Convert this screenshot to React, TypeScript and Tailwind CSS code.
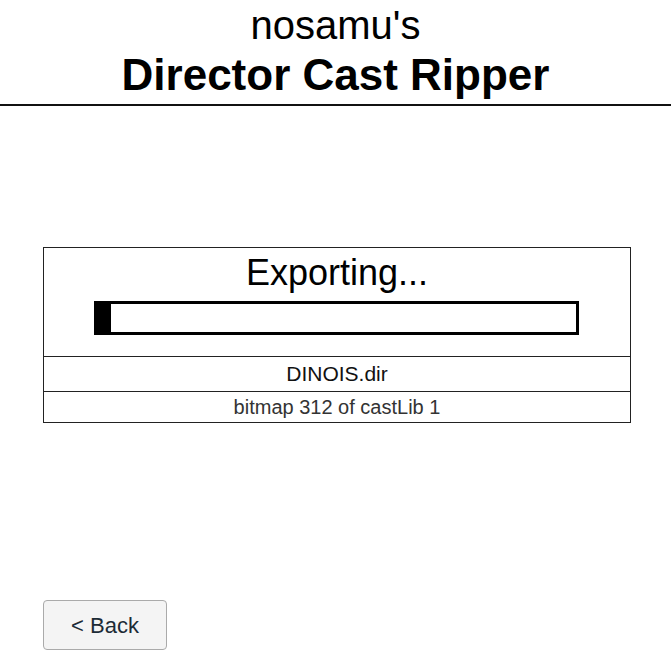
export default function App() {
  const progress = 3; // percent done

  return (
    <div className="min-h-screen bg-white font-['Liberation_Sans',Arial,sans-serif] text-black">
      <header className="border-b-2 border-[#111] pt-[2px] pb-[2px] text-center">
        <div className="text-[40px] leading-[46px]">nosamu's</div>
        <h1 className="text-[44px] font-bold leading-[54px]">Director Cast Ripper</h1>
      </header>

      <section className="ml-[43px] mr-[40px] mt-[141px] border border-[#222]">
        <div className="flex flex-col items-center pt-[4px] pb-[21px]">
          <div className="text-[36px] leading-[42px]">Exporting...</div>
          <div className="mt-[7px] h-[34px] w-[485px] -translate-x-[1px] border-[3px] border-black">
            <div className="h-full bg-black" style={{ width: `${progress}%` }} />
          </div>
        </div>
        <div className="flex h-[35px] items-center justify-center border-t border-[#222] text-[21px] text-[#111]">
          DINOIS.dir
        </div>
        <div className="flex h-[31px] items-center justify-center border-t border-[#222] text-[20px] text-[#333]">
          bitmap 312 of castLib 1
        </div>
      </section>

      <div className="ml-[43px] mt-[177px]">
        <button
          type="button"
          className="h-[50px] w-[124px] rounded-[4px] border border-[#aaa] bg-[#f4f4f4] text-[22px] text-[#1c2b36]"
        >
          &lt; Back
        </button>
      </div>
    </div>
  );
}
